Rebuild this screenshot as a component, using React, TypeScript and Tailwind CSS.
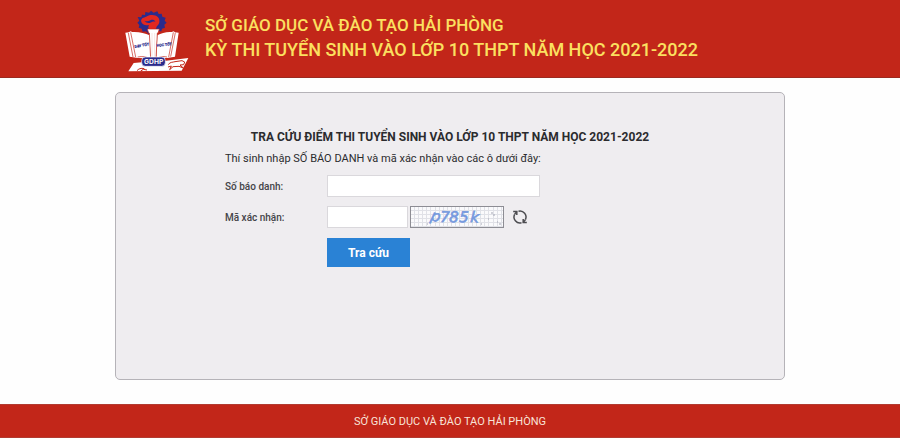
import { useState } from "react";

function Logo() {
  return (
    <svg
      viewBox="36 28 204 192"
      className="h-16 w-[68px] shrink-0"
      role="img"
      aria-label="GDHP"
    >
      <path
        d="M80 52l11 1 2-8 9 1 1-9 11 2 6-6 8 6 11-4 4 8 9-1 2 9 10 3-3 9 6 6-7 6 2 9-9 3-2 8-11-1-6 8h-22l-7-7-10 1-3-9-9-3 2-8-6-7 6-6z"
        fill="#2b2b8c"
      />
      <path
        d="M90 64c2-12 12-9 18-14 9-6 26-6 33 3 7 8 5 21-3 26l-5 11h-19c-2-6-3-9 0-14-10 3-21 0-24-12z"
        fill="#e3281f"
      />
      <path d="M100 63c6 3 12 2 18-1 7-3 12-1 15 4-7-2-10 1-15 3-7 2-13 0-18-6z" fill="#2b2b8c" />
      <path
        d="M43 99l11-1 4-3 6 2c20-1 38 3 52 10l3 69-38-1-25-4zM203 99l-11-1-4-3-6 2c-17-1-31 3-43 10l-3 69 32-1 24-4z"
        fill="#fff"
      />
      <g fill="none" stroke="#c22619" strokeWidth="2">
        <path d="M52 100l14 72M59 98l15 74M193 99l-14 72M187 98l-14 74" />
        <path d="M80 172c14-3 27-1 36 5M168 172c-12-3-23-1-31 5" />
      </g>
      <path d="M109 88h36l-4 12h-2l-4 78h-16l-4-78h-2z" fill="#fff" stroke="#c22619" strokeWidth="2" />
      <path d="M123 100v74M131 100v74" stroke="#e9b1ab" strokeWidth="1" />
      <g
        fill="#2b2b8c"
        stroke="#2b2b8c"
        strokeWidth="0.6"
        fontFamily="Roboto, sans-serif"
        fontWeight="700"
        fontSize="11"
        textAnchor="middle"
      >
        <text x="93" y="141" transform="rotate(-10 93 141)">
          DẠY TỐT
        </text>
        <text x="160" y="139" transform="rotate(-6 160 139)">
          HỌC TỐT
        </text>
      </g>
      <path d="M68 190l33-3 58-3 73-9-20 38-160 2z" fill="#fff" />
      <path
        d="M172 195c4-8 13-7 20-9l21-3 8 4-3 8-11 1 10 9-13-5-18 1-10 9 5-11-10 3M78 213c4-5 12-9 22-6M89 214l8-5 11 2"
        fill="none"
        stroke="#c22619"
        strokeWidth="3"
      />
      <rect x="92" y="172" width="71" height="28" rx="11" fill="#2b2b8c" stroke="#fff" strokeWidth="2" />
      <text
        x="128"
        y="193"
        textAnchor="middle"
        fontFamily="Inter, sans-serif"
        fontWeight="700"
        fontSize="20"
        fill="#fff"
      >
        GDHP
      </text>
    </svg>
  );
}

function Captcha() {
  const columns = [3, 7, 11, 15, 19, 24, 28, 32, 36, 40, 44, 48, 53, 57, 61, 65, 69, 73, 77, 82, 86, 90];
  const rows = [3, 7, 11, 15, 19];
  return (
    <svg
      viewBox="0 0 92 20"
      className="h-[22px] w-[94px] shrink-0 border border-[#8d8d94] bg-[#fafafc]"
      role="img"
      aria-label="p785k"
    >
      <g stroke="#e0e1e7" strokeWidth="1">
        {columns.map((x) => (
          <path key={x} d={`M${x + 0.5} 0v20`} />
        ))}
        {rows.map((y) => (
          <path key={y} d={`M0 ${y + 0.5}h92`} />
        ))}
      </g>
      <text
        x="19 29 38 48 59"
        y="13 15 15 15 15"
        rotate="14 2 2 2 4"
        fontFamily="'DejaVu Sans', sans-serif"
        fontStyle="italic"
        stroke="#7599de"
        strokeWidth="0.6"
        fontSize="15"
        fill="#7599de"
      >
        p785k
      </text>
      <path d="M80 6h2M82 8h2M77 12h1M88 17h2M86 15h1M70 17h1M16 17h1" stroke="#a3a5b3" />
    </svg>
  );
}

function RefreshIcon() {
  return (
    <svg viewBox="0 0 16 16" className="size-4" fill="none" stroke="#4c4c50" strokeWidth="1.5">
      <path d="M6.5 2.2A6 6 0 0 1 13.4 10.6" />
      <path d="M9.5 13.8A6 6 0 0 1 2.6 5.4" />
      <path d="M1.2 2.4H4.8V6M14.8 13.6H11.2V10" />
      <path d="M4.8 2.4L2.6 5.4M11.2 13.6L13.4 10.6" />
    </svg>
  );
}

export default function App() {
  const [candidate, setCandidate] = useState("");
  const [code, setCode] = useState("");

  return (
    <div className="bg-[#fefefe] font-['Roboto',sans-serif] text-[#2b2b2e]">
      <header className="border-b border-[#9c2a20] bg-[#c22619]">
        <div className="mx-auto flex max-w-[670px] items-start gap-[14px] pt-[9px] pb-1 pl-2">
          <Logo />
          <div className="pt-1 text-lg font-medium whitespace-nowrap text-[#fbe060]">
            <p className="text-[17px] leading-6">SỞ GIÁO DỤC VÀ ĐÀO TẠO HẢI PHÒNG</p>
            <p className="leading-[26px]">KỲ THI TUYỂN SINH VÀO LỚP 10 THPT NĂM HỌC 2021-2022</p>
          </div>
        </div>
      </header>

      <main className="px-6 pt-[14px] pb-6">
        <section className="mx-auto min-h-72 max-w-[670px] rounded-[5px] border border-[#b5b3b8] bg-[#efedf0] px-[109px] pt-9">
          <h1 className="text-center text-xs leading-4 font-bold whitespace-nowrap">
            TRA CỨU ĐIỂM THI TUYỂN SINH VÀO LỚP 10 THPT NĂM HỌC 2021-2022
          </h1>
          <p className="mt-[6px] text-[11px] leading-4 whitespace-nowrap">
            Thí sinh nhập SỐ BÁO DANH và mã xác nhận vào các ô dưới đây:
          </p>
          <form
            className="mt-2 grid grid-cols-[102px_1fr] items-center gap-y-[9px]"
            onSubmit={(event) => event.preventDefault()}
          >
            <label htmlFor="candidate" className="text-[10px] font-medium text-[#444448]">
              Số báo danh:
            </label>
            <input
              id="candidate"
              type="text"
              value={candidate}
              onChange={(event) => setCandidate(event.target.value)}
              className="h-[22px] w-[213px] border border-[#dad8dc] bg-white px-2 text-xs"
            />
            <label htmlFor="code" className="text-[10px] font-medium text-[#444448]">
              Mã xác nhận:
            </label>
            <div className="flex items-center">
              <input
                id="code"
                type="text"
                value={code}
                onChange={(event) => setCode(event.target.value)}
                className="mr-[2px] h-[22px] w-[81px] border border-[#dad8dc] bg-white px-2 text-xs"
              />
              <Captcha />
              <button type="button" aria-label="Đổi mã xác nhận" className="ml-2">
                <RefreshIcon />
              </button>
            </div>
            <button
              type="submit"
              className="col-start-2 mt-px h-[29px] w-[83px] bg-[#2a82d5] text-xs font-bold text-white"
            >
              Tra cứu
            </button>
          </form>
        </section>
      </main>

      <footer className="border-y border-[#b23b31] bg-[#c22619] pt-[9px] pb-[7px] text-center text-[11px] leading-4 text-[#f8e3d8]">
        SỞ GIÁO DỤC VÀ ĐÀO TẠO HẢI PHÒNG
      </footer>
    </div>
  );
}
